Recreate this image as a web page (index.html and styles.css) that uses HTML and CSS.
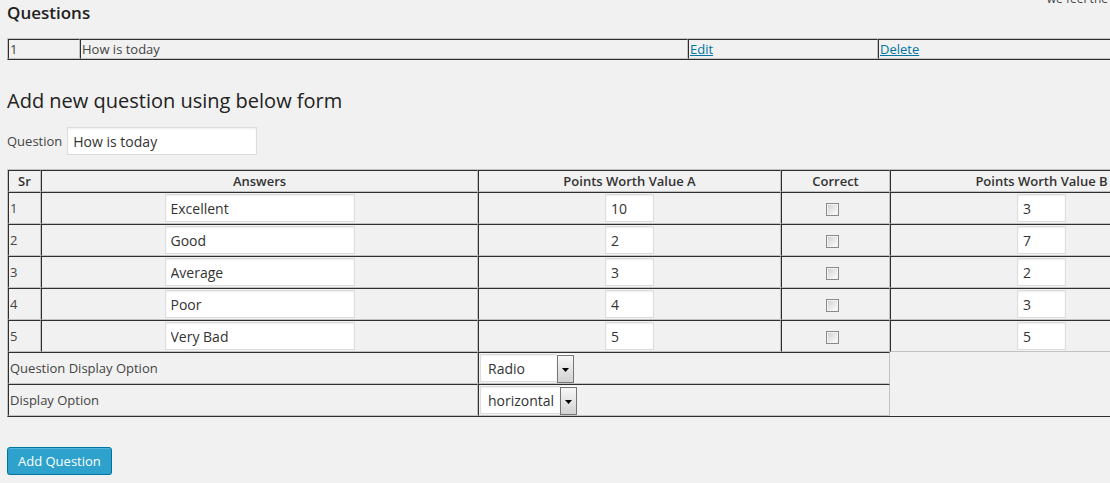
FILE: index.html
```html
<!DOCTYPE html>
<html lang="en">
<head>
<meta charset="utf-8">
<title>Questions</title>
<link rel="stylesheet" href="styles.css">
</head>
<body>
<div class="wrap">
  <div class="topline">
    <h3 class="title">Questions</h3>
    <span class="notice">we feel the</span>
  </div>

  <table class="grid list">
    <tr>
      <td class="l-id">1</td>
      <td class="l-q">How is today</td>
      <td class="l-edit"><a href="#">Edit</a></td>
      <td class="l-del"><a href="#">Delete</a></td>
    </tr>
  </table>

  <h2 class="form-title">Add new question using below form</h2>

  <div class="q-field">
    <label class="q-label" for="q">Question</label>
    <input id="q" class="text q-input" type="text" value="How is today">
  </div>

  <table class="grid answers">
    <tr>
      <th class="c-sr">Sr</th>
      <th class="c-ans">Answers</th>
      <th class="c-pa">Points Worth Value A</th>
      <th class="c-cor">Correct</th>
      <th class="c-pb">Points Worth Value B</th>
    </tr>
    <tr>
      <td>1</td>
      <td><input class="text ans" type="text" value="Excellent"></td>
      <td><input class="text pts" type="text" value="10"></td>
      <td class="cor"><input class="chk" type="checkbox"></td>
      <td><input class="text pts" type="text" value="3"></td>
    </tr>
    <tr>
      <td>2</td>
      <td><input class="text ans" type="text" value="Good"></td>
      <td><input class="text pts" type="text" value="2"></td>
      <td class="cor"><input class="chk" type="checkbox"></td>
      <td><input class="text pts" type="text" value="7"></td>
    </tr>
    <tr>
      <td>3</td>
      <td><input class="text ans" type="text" value="Average"></td>
      <td><input class="text pts" type="text" value="3"></td>
      <td class="cor"><input class="chk" type="checkbox"></td>
      <td><input class="text pts" type="text" value="2"></td>
    </tr>
    <tr>
      <td>4</td>
      <td><input class="text ans" type="text" value="Poor"></td>
      <td><input class="text pts" type="text" value="4"></td>
      <td class="cor"><input class="chk" type="checkbox"></td>
      <td><input class="text pts" type="text" value="3"></td>
    </tr>
    <tr>
      <td>5</td>
      <td><input class="text ans" type="text" value="Very Bad"></td>
      <td><input class="text pts" type="text" value="5"></td>
      <td class="cor"><input class="chk" type="checkbox"></td>
      <td><input class="text pts" type="text" value="5"></td>
    </tr>
    <tr>
      <td colspan="2">Question Display Option</td>
      <td colspan="2">
        <div class="sel w-radio">
          <select class="sel-box"><option>Radio</option></select>
          <span class="sel-arrow"><svg width="7" height="4" viewBox="0 0 7 4"><path d="M0 0H7L3.5 4Z" fill="#000"/></svg></span>
        </div>
      </td>
    </tr>
    <tr>
      <td colspan="2">Display Option</td>
      <td colspan="2">
        <div class="sel w-horiz">
          <select class="sel-box"><option>horizontal</option></select>
          <span class="sel-arrow"><svg width="7" height="4" viewBox="0 0 7 4"><path d="M0 0H7L3.5 4Z" fill="#000"/></svg></span>
        </div>
      </td>
    </tr>
  </table>

  <button class="button-primary" type="button">Add Question</button>
</div>
</body>
</html>
```

FILE: styles.css
```css
html, body {
  margin: 0;
  padding: 0;
  background: #f1f1f1;
  overflow: hidden;
}

body {
  font-family: "Open Sans", "Liberation Sans", sans-serif;
  font-size: 13px;
  color: #444;
}

.wrap {
  width: 1103px;
  padding: 0 0 0 7px;
}

.topline {
  display: flex;
  align-items: flex-start;
  justify-content: space-between;
}

.title {
  margin: 0;
  padding-top: 1px;
  font-size: 17px;
  line-height: 23px;
  font-weight: 600;
  color: #222;
}

.notice {
  margin-top: -9px;
  padding-right: 2px;
  font-size: 12px;
  line-height: 16px;
  color: #444;
  white-space: nowrap;
}

/* tables with border="1" look */
.grid {
  border-spacing: 0;
  table-layout: fixed;
  width: 1187px;
  border-width: 1px;
  border-style: solid;
  border-color: #c2c2c2 #2e2e2e #2e2e2e #c2c2c2;
}

.grid td,
.grid th {
  padding: 1px;
  border-width: 1px;
  border-style: solid;
  border-color: #2e2e2e #c2c2c2 #c2c2c2 #2e2e2e;
  line-height: 18px;
  vertical-align: middle;
  text-align: left;
  overflow: hidden;
  white-space: nowrap;
}

.list {
  margin-top: 14px;
}

.list td {
  line-height: 16px;
  color: #444;
}

.l-id { width: 68px; }
.l-q { width: 604px; }
.l-edit { width: 186px; }
.l-del { width: 311px; }

.list a {
  color: #0074a2;
  text-decoration: underline;
}

.form-title {
  margin: 27px 0 0;
  font-size: 20px;
  line-height: 27px;
  font-weight: 400;
  color: #222;
}

.q-field {
  margin-top: 13px;
  display: flex;
  align-items: center;
  gap: 5px;
}

.q-label {
  color: #444;
}

.text {
  box-sizing: border-box;
  height: 28px;
  margin: 0;
  padding: 0 5px;
  border: 1px solid #ddd;
  background: #fff;
  box-shadow: inset 0 1px 2px rgba(0, 0, 0, 0.07);
  font-family: "Open Sans", "Liberation Sans", sans-serif;
  font-size: 14px;
  color: #333;
  outline: none;
}

.q-input {
  width: 190px;
}

.answers {
  margin-top: 14px;
}

.answers th {
  text-align: center;
  font-weight: 600;
  color: #333;
}

.c-sr { width: 29px; }
.c-ans { width: 433px; }
.c-pa { width: 299px; }
.c-cor { width: 105px; }
.c-pb { width: 299px; }

.ans {
  display: block;
  width: 190px;
  margin: 0 auto;
}

.pts {
  display: block;
  width: 49px;
  margin: 0 auto;
}

.answers td.cor {
  padding-right: 7px;
}

.chk {
  -webkit-appearance: none;
  appearance: none;
  display: block;
  box-sizing: border-box;
  width: 13px;
  height: 13px;
  margin: 2px auto 0;
  border: 1px solid #8a8a8a;
  background: linear-gradient(135deg, #cfcfcf 0%, #eeeeee 65%, #fff 100%);
  box-shadow: inset 0 0 0 1px #f4f4f4;
}

.sel {
  display: flex;
  height: 28px;
  background: #fff;
  box-sizing: border-box;
}

.w-radio { width: 94px; }
.w-horiz { width: 97px; }

.sel-box {
  -webkit-appearance: none;
  appearance: none;
  flex: 1;
  min-width: 0;
  height: 28px;
  margin: 0;
  padding: 0 0 0 7px;
  border: 1px solid #ddd;
  border-right: 0;
  background: #fff;
  box-shadow: inset 0 1px 2px rgba(0, 0, 0, 0.07);
  font-family: "Open Sans", "Liberation Sans", sans-serif;
  font-size: 14px;
  color: #333;
  outline: none;
}

.sel-arrow {
  flex: none;
  width: 15px;
  height: 26px;
  margin-top: 1px;
  border: 1px solid #767676;
  background: linear-gradient(#f7f7f7, #d2d2d2);
  display: flex;
  align-items: center;
  justify-content: center;
  box-sizing: content-box;
  margin-bottom: -1px;
}

.sel-arrow svg {
  display: block;
  margin-top: 1px;
}

.button-primary {
  display: block;
  margin-top: 30px;
  height: 28px;
  padding: 0 10px 1px;
  border: 1px solid #0074a2;
  border-radius: 3px;
  background: #2ea2cc;
  box-shadow: inset 0 1px 0 rgba(120, 200, 230, 0.5), 0 1px 0 rgba(0, 0, 0, 0.15);
  font-family: "Open Sans", "Liberation Sans", sans-serif;
  font-size: 13px;
  line-height: 26px;
  color: #fff;
  cursor: pointer;
}
```
